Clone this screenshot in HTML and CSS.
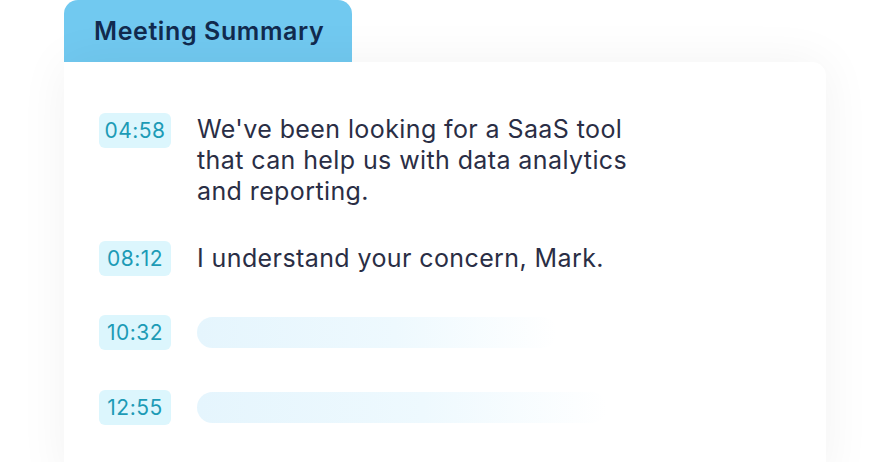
FILE: index.html
```html
<!DOCTYPE html>
<html>
<head>
<meta charset="utf-8">
<link rel="stylesheet" href="styles.css">
</head>
<body>
<div class="wrap">
  <div class="tab">Meeting Summary</div>
  <div class="card">
    <div class="row row-1">
      <span class="time">04:58</span>
      <p class="text">We've been looking for a SaaS tool<br>that can help us with data analytics<br>and reporting.</p>
    </div>
    <div class="row row-2">
      <span class="time">08:12</span>
      <p class="text">I understand your concern, Mark.</p>
    </div>
    <div class="row row-3">
      <span class="time">10:32</span>
      <div class="bar bar-a"></div>
    </div>
    <div class="row row-4">
      <span class="time">12:55</span>
      <div class="bar bar-b"></div>
    </div>
  </div>
</div>
</body>
</html>
```
FILE: styles.css
```css
html, body {
  margin: 0;
  padding: 0;
  background: #ffffff;
  width: 890px;
  height: 462px;
  overflow: hidden;
  font-family: Inter, "Noto Sans", sans-serif;
}
.wrap {
  padding-left: 64px;
}
.tab {
  width: 288px;
  height: 62px;
  box-sizing: border-box;
  padding-left: 30px;
  line-height: 62px;
  background: #71c9f0;
  border-radius: 14px 14px 0 0;
  color: #112a4e;
  font-size: 25px;
  font-weight: 600;
  letter-spacing: 0.6px;
}
.card {
  width: 762px;
  height: 420px;
  box-sizing: border-box;
  background: #ffffff;
  border-radius: 0 14px 0 0;
  box-shadow: 0 0 50px rgba(0, 0, 0, 0.055);
  padding: 51px 0 0 35px;
  display: flex;
  flex-direction: column;
}
.row {
  display: flex;
  align-items: flex-start;
  gap: 26px;
}
.row-2 { margin-top: 34px; }
.row-3 { margin-top: 39px; }
.row-4 { margin-top: 40px; }
.row-2 .text { padding-top: 2px; }
.time {
  flex: none;
  width: 72px;
  height: 35px;
  line-height: 35px;
  text-align: center;
  border-radius: 6px;
  background: #dcf6fd;
  color: #1c9bb6;
  font-size: 21px;
  letter-spacing: 0.5px;
}
.text {
  margin: 0;
  font-size: 25px;
  line-height: 31px;
  color: #2a2e45;
  padding-top: 1px;
  letter-spacing: 0.4px;
}
.bar {
  height: 31px;
  margin-top: 2px;
  border-radius: 16px;
  background: linear-gradient(90deg, #e5f5fd 0%, #eef9fe 55%, rgba(255, 255, 255, 0) 100%);
}
.bar-a { width: 360px; }
.bar-b { width: 410px; }
```
